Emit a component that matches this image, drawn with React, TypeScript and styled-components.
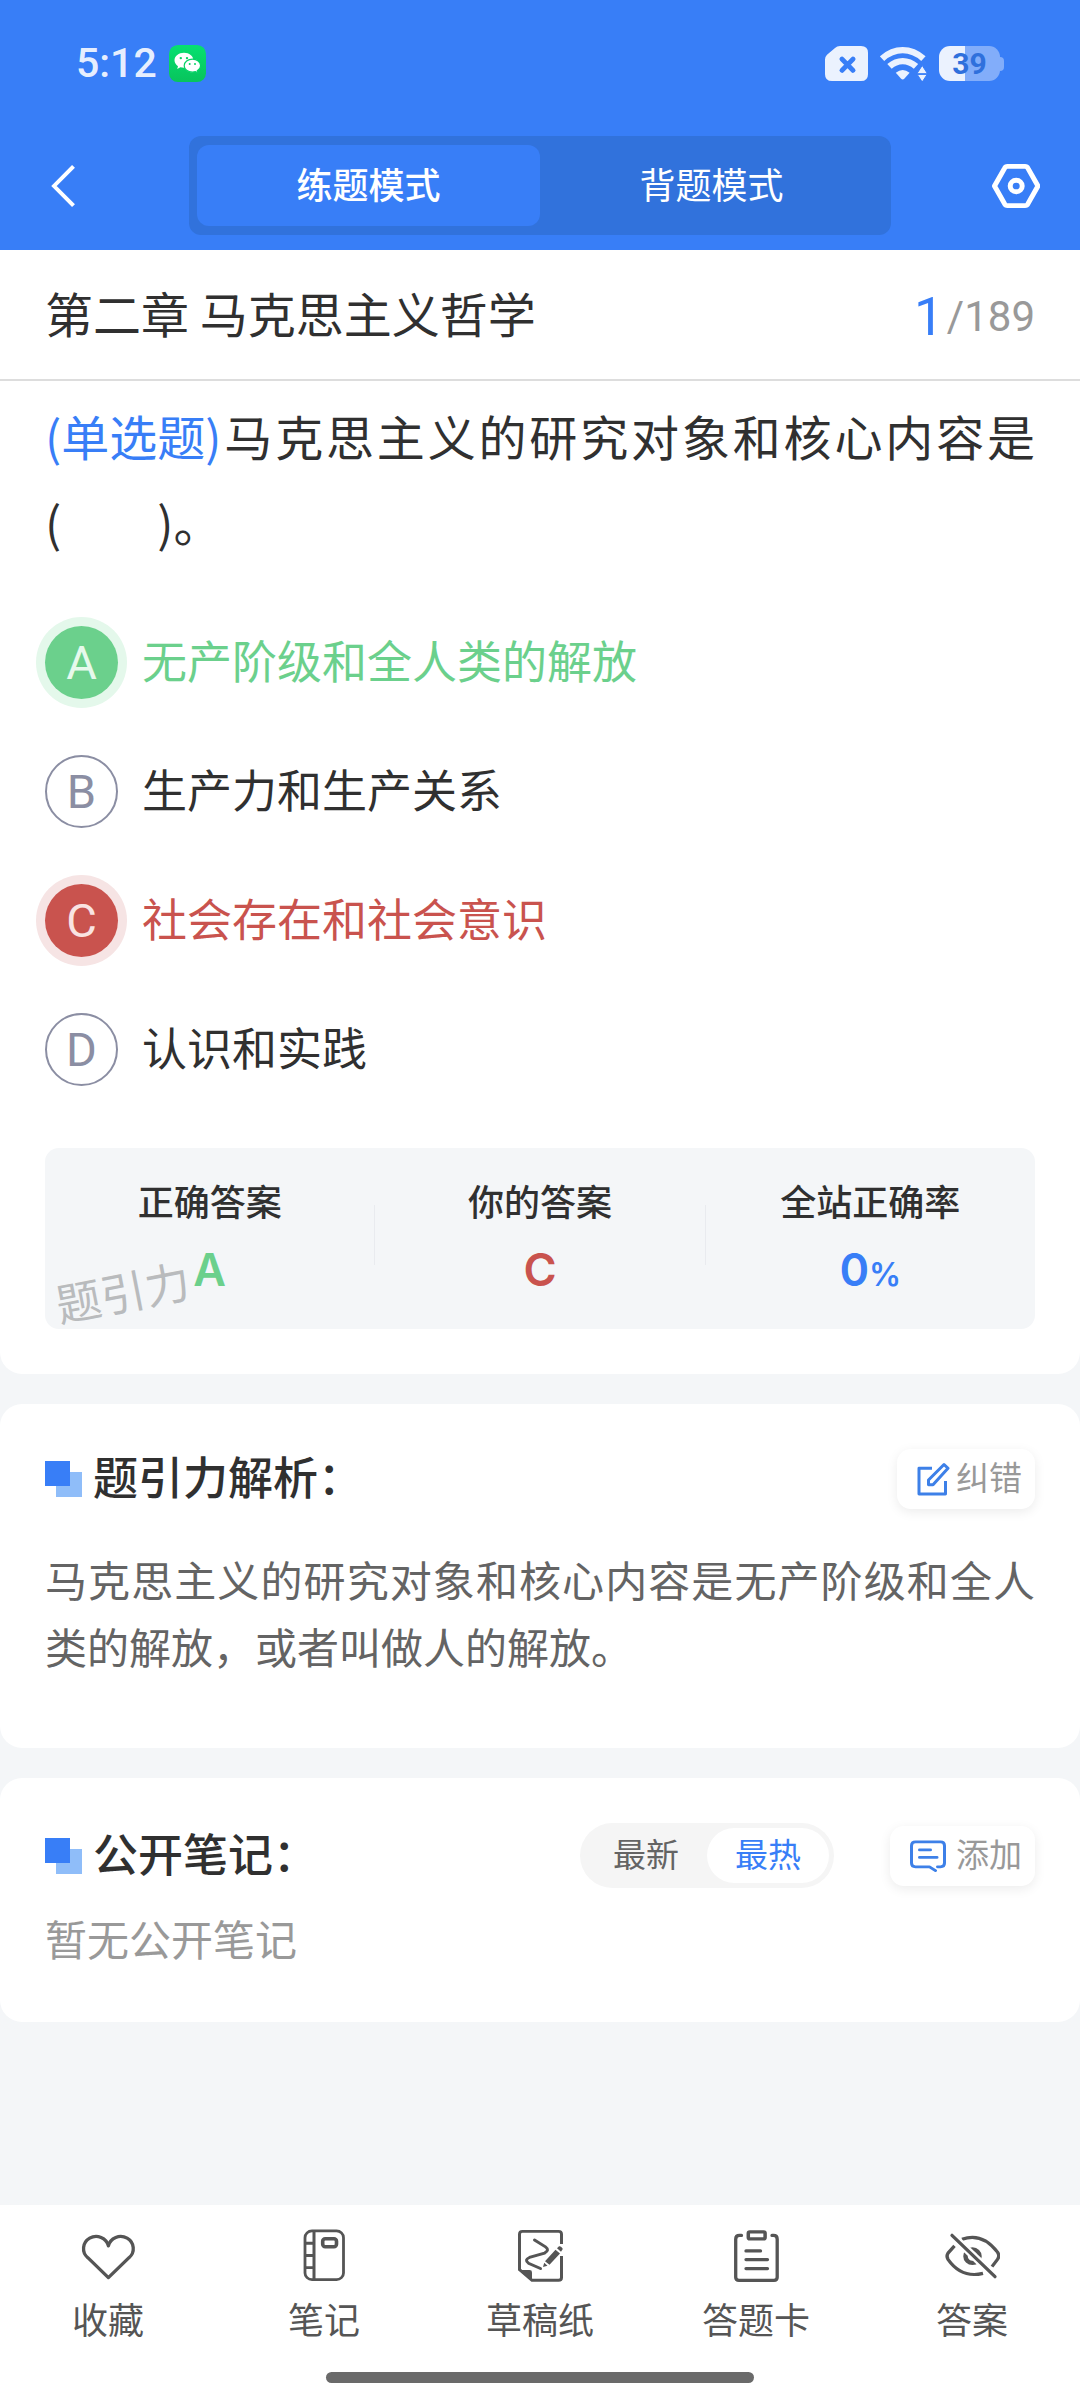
import React, { useState } from "react";
import styled, { createGlobalStyle, css } from "styled-components";

const color = {
  blue: "#387ef7",
  blueDark: "#3172dc",
  green: "#6bd08c",
  red: "#c9534e",
  ink: "#303030",
  body: "#646464",
  muted: "#999999",
  page: "#f4f6f8",
  nav: "#555555",
};

const latin = `Roboto, "Noto Sans CJK SC", sans-serif`;

const GlobalStyle = createGlobalStyle`
  * { box-sizing: border-box; }
  body {
    margin: 0;
    background: ${color.page};
    color: ${color.ink};
    font-family: "Noto Sans CJK SC", sans-serif;
  }
  button {
    margin: 0;
    padding: 0;
    border: 0;
    background: none;
    color: inherit;
    font: inherit;
    cursor: pointer;
  }
  h1, h2, p, dl, dd, dt, fieldset { margin: 0; padding: 0; border: 0; font-weight: 400; }
  svg { display: block; flex: none; }
`;

const Page = styled.div`
  display: flex;
  flex-direction: column;
  min-height: 100vh;
`;

/* CJK glyphs sit low in their line box; this lifts them to the optical centre */
const Label = styled.span`
  padding-bottom: 6px;
`;

/* ---------- header ---------- */

const Header = styled.header`
  padding-bottom: 5px;
  background: ${color.blue};
  color: #fff;
`;

const StatusBar = styled.div`
  display: flex;
  align-items: center;
  justify-content: space-between;
  height: 126px;
  padding: 0 76px;
`;

const StatusGroup = styled.div`
  display: flex;
  align-items: center;
  gap: 12px;
`;

const Time = styled.span`
  font: 500 41px/48px ${latin};
  color: rgba(255, 255, 255, 0.9);
`;

const Battery = styled.span`
  position: relative;
  width: 61px;
  height: 35px;
  margin-right: 4px;
  border-radius: 11px;
  background: linear-gradient(90deg, #ebf2fe 26px, #82adfa 26px);
  font: 700 30px/36px ${latin};
  text-align: center;
  color: #2f70dc;

  &::after {
    content: "";
    position: absolute;
    left: 61px;
    top: 11px;
    width: 4px;
    height: 14px;
    border-radius: 0 4px 4px 0;
    background: #82adfa;
  }
`;

const Toolbar = styled.div`
  display: flex;
  align-items: center;
  height: 119px;
  padding: 0 40px;
`;

const IconButton = styled.button`
  display: flex;
  align-items: center;
  justify-content: center;
  width: 48px;
  height: 48px;
`;

const ModeTabs = styled.div`
  display: flex;
  flex: 1;
  margin: 0 101px;
  padding: 9px 8px;
  border-radius: 12px;
  background: ${color.blueDark};
`;

const ModeTab = styled.button<{ $active: boolean }>`
  flex: 1;
  display: flex;
  align-items: center;
  justify-content: center;
  height: 81px;
  border-radius: 12px;
  background: ${(p) => (p.$active ? color.blue : "transparent")};
  font-size: 36px;
  font-weight: ${(p) => (p.$active ? 500 : 400)};
`;

/* ---------- cards ---------- */

const Main = styled.main`
  display: flex;
  flex-direction: column;
  gap: 30px;
`;

const Card = styled.section<{ $first?: boolean; $bottom: number }>`
  padding: ${(p) => (p.$first ? 0 : 45)}px 45px ${(p) => p.$bottom}px;
  border-radius: ${(p) => (p.$first ? "0 0 22px 22px" : "22px")};
  background: #fff;
`;

const ChapterRow = styled.div`
  display: flex;
  align-items: center;
  justify-content: space-between;
  height: 131px;
  margin: 0 -45px;
  padding: 0 45px;
  border-bottom: 2px solid #dddddd;
`;

const ChapterTitle = styled.h1`
  padding-bottom: 6px;
  font-size: 48px;
  line-height: 72px;
`;

const Progress = styled.span`
  display: flex;
  align-items: center;
  gap: 3px;
  padding-top: 4px;
  font: 400 42px/60px ${latin};
  color: #999999;
`;

const Current = styled.span`
  font-size: 53px;
  color: ${color.blue};
`;

const Question = styled.p`
  margin-top: 11px;
  font-size: 48px;
  line-height: 86px;
  text-align: justify;
`;

const Kind = styled.span`
  display: inline-block;
  color: ${color.blue};
`;

const Blank = styled.span`
  white-space: nowrap;
`;

const Options = styled.fieldset`
  display: flex;
  flex-direction: column;
  margin-top: 34px;
  min-width: 0;
`;

type Mark = "right" | "wrong" | "none";

const markColor = { right: color.green, wrong: color.red, none: color.ink };

const Option = styled.label<{ $mark: Mark }>`
  display: flex;
  align-items: center;
  gap: 24px;
  height: 129px;
  font-size: 45px;
  color: ${(p) => markColor[p.$mark]};
  cursor: pointer;
`;

const HiddenRadio = styled.input`
  position: absolute;
  width: 1px;
  height: 1px;
  margin: 0;
  opacity: 0;
`;

const Letter = styled.span<{ $mark: Mark }>`
  flex: none;
  width: 73px;
  height: 73px;
  border-radius: 50%;
  font: 400 47px/73px ${latin};
  text-align: center;
  ${(p) =>
    p.$mark === "none"
      ? css`
          border: 2px solid #8b8ea3;
          line-height: 70px;
          color: #8b8ea3;
        `
      : css`
          background: ${markColor[p.$mark]};
          box-shadow: 0 0 0 9px ${p.$mark === "right" ? "#e4f8eb" : "#f6e4e4"};
          color: ${p.$mark === "right" ? "#e6f9ec" : "#f9e3e2"};
        `}
`;

const Result = styled.dl`
  position: relative;
  display: flex;
  align-items: center;
  height: 181px;
  margin-top: 34px;
  padding-bottom: 8px;
  border-radius: 14px;
  background: #f4f6f8;
`;

const ResultCell = styled.div`
  flex: 1;
  text-align: center;
`;

const ResultLabel = styled.dt`
  font-size: 36px;
  line-height: 54px;
  font-weight: 500;
`;

const ResultValue = styled.dd<{ $color: string }>`
  height: 54px;
  margin-top: 16px;
  font: 600 45px/54px Inter, sans-serif;
  color: ${(p) => p.$color};
`;

const Unit = styled.span`
  font-size: 32px;
`;

const Divider = styled.span`
  width: 1px;
  height: 60px;
  background: #e9ebef;
`;

const Watermark = styled.span`
  position: absolute;
  left: 10px;
  bottom: 6px;
  font-size: 45px;
  line-height: 64px;
  color: #b9bbbd;
  transform: rotate(-11deg);
`;

const CardHead = styled.div`
  display: flex;
  align-items: center;
`;

const CardTitle = styled.h2`
  flex: 1;
  display: flex;
  align-items: center;
  gap: 11px;
  font-size: 45px;
  line-height: 54px;
  font-weight: 500;
`;

const ActionButton = styled.button`
  display: flex;
  align-items: center;
  gap: 6px;
  height: 60px;
  padding: 0 13px 0 20px;
  border-radius: 14px;
  background: #fff;
  box-shadow: 0 3px 12px rgba(0, 0, 0, 0.08);
  font-size: 33px;
  color: ${color.muted};
`;

const Explanation = styled.p`
  margin-top: 36px;
  font-size: 42px;
  line-height: 67px;
  text-align: justify;
  color: ${color.body};
`;

const Empty = styled.p`
  margin-top: 16px;
  font-size: 42px;
  line-height: 67px;
  color: ${color.muted};
`;

const Segment = styled.div`
  display: flex;
  margin-right: 56px;
  padding: 5px;
  border-radius: 34px;
  background: #f5f5f5;
`;

const SegmentItem = styled.button<{ $active: boolean }>`
  display: flex;
  align-items: center;
  justify-content: center;
  width: 122px;
  height: 55px;
  border-radius: 28px;
  background: ${(p) => (p.$active ? "#fff" : "transparent")};
  font-size: 33px;
  color: ${(p) => (p.$active ? color.blue : color.body)};
`;

/* ---------- bottom navigation ---------- */

const BottomNav = styled.nav`
  margin-top: auto;
  padding-top: 24px;
  background: #fff;
  color: ${color.nav};
`;

const NavRow = styled.div`
  display: flex;
`;

const NavItem = styled.button`
  flex: 1;
  display: flex;
  flex-direction: column;
  align-items: center;
  gap: 8px;
  font-size: 36px;
  line-height: 54px;
`;

const HomeBar = styled.div`
  width: 428px;
  height: 11px;
  margin: 27px auto 17px;
  border-radius: 6px;
  background: #6a6a6a;
`;

/* ---------- icons ---------- */

const WechatIcon = () => (
  <svg width="37" height="37" viewBox="0 0 37 38" preserveAspectRatio="none">
    <defs>
      <linearGradient id="wx" x1="0" y1="0" x2="0" y2="1">
        <stop offset="0" stopColor="#06e070" />
        <stop offset="1" stopColor="#08c45c" />
      </linearGradient>
    </defs>
    <rect width="37" height="38" rx="9" fill="url(#wx)" />
    <path d="M15 8c-5.300 0-9.500 3.400-9.500 7.700 0 2.500 1.400 4.600 3.500 6l-.8 2.900 3.200-1.700c1.100.3 2.300.5 3.600.5 5.200 0 9.400-3.400 9.400-7.700S20.200 8 15 8z" fill="#fff" />
    <path d="M23.500 14.500c-4.600 0-8.300 3-8.300 6.700s3.700 6.700 8.300 6.700c1.100 0 2.100-.2 3-.5l2.300 1.300-.5-2.300c2-1.200 3.300-3 3.300-5.200 0-3.700-3.600-6.700-8.100-6.700z" fill="#fff" stroke="#07d266" strokeWidth="1.200" />
    <g fill="#07d266">
      <circle cx="11.800" cy="13.400" r="1.200" />
      <circle cx="18" cy="13.400" r="1.200" />
      <circle cx="20.700" cy="19.500" r="1" />
      <circle cx="26" cy="19.500" r="1" />
    </g>
  </svg>
);

const SimIcon = () => (
  <svg width="43" height="35" viewBox="0 0 43 36" preserveAspectRatio="none">
    <path d="M15 0H36q7 0 7 7V29q0 7-7 7H7q-7 0-7-7V14q0-3 2-5L10 2q2-2 5-2z" fill="#ebf2fe" />
    <path d="M17 13.500L28 25M28 13.500L17 25" stroke={color.blue} strokeWidth="5" strokeLinecap="round" />
  </svg>
);

const WifiIcon = () => (
  <svg width="47" height="35" viewBox="0 0 47 36" preserveAspectRatio="none">
    <g fill="none" stroke="#ebf2fe" strokeWidth="6.500">
      <path d="M2 13Q11.500 4.300 22.700 4.300T43.400 13" />
      <path d="M9.500 21Q15.500 15.500 22.700 15.500T36 21" />
    </g>
    <path d="M15.800 27.500Q22.700 22 29.600 27.500L24.500 33.500Q22.700 35.500 20.900 33.500z" fill="#ebf2fe" />
    <path d="M42.200 20l5.300 8.500h-10.600zM42.200 37l-5-7.800h10z" fill="#ebf2fe" stroke={color.blue} strokeWidth="1" />
  </svg>
);

const BackIcon = () => (
  <svg width="26" height="44" viewBox="0 0 26 46" fill="none" stroke="#fff" strokeWidth="4" preserveAspectRatio="none">
    <path d="M22.500 2.500L3 23L22.500 43.500" />
  </svg>
);

const SettingsIcon = () => (
  <svg width="48" height="44" viewBox="0 0 48 46" fill="none" stroke="#fff" strokeWidth="5" strokeLinejoin="round" preserveAspectRatio="none">
    <path d="M2.500 23L12.500 4.500Q13.500 2.500 15.500 2.500H33Q35 2.500 36 4.500L46 23L36 41.500Q35 43.500 33 43.500H15.500Q13.500 43.500 12.500 41.500z" />
    <circle cx="24.200" cy="23" r="6" />
  </svg>
);

const SquaresIcon = () => (
  <svg width="37" height="36" viewBox="0 0 37 36">
    <rect x="11" y="11" width="26" height="25" fill="#8fbdf9" />
    <rect width="25" height="25" fill="#387ef7" />
  </svg>
);

const EditIcon = () => (
  <svg width="33" height="34" viewBox="0 0 33 35" fill="none" stroke="#3d80e8" strokeWidth="3" strokeLinejoin="round" preserveAspectRatio="none">
    <path d="M15 6.500H2V33H28.500V19.500" />
    <path d="M27 2.500L31 6.500L16 23.500H11.500V18.500z" />
  </svg>
);

const CommentIcon = () => (
  <svg width="40" height="32" viewBox="0 0 40 34" fill="none" stroke="#3d80e8" strokeWidth="3" strokeLinecap="round" strokeLinejoin="round" preserveAspectRatio="none">
    <path d="M27.500 28.500H30.500Q34.500 28.500 34.500 24.500V6Q34.500 2 30.500 2H5.500Q1.500 2 1.500 6V24.500Q1.500 28.500 5.500 28.500H19.500L25.500 32.500" />
    <path d="M9.500 10.500H20.500M9.500 18.500H27" />
  </svg>
);

const navSvg = {
  width: 56,
  height: 54,
  viewBox: "0 0 56 56",
  preserveAspectRatio: "none",
  fill: "none",
  stroke: "currentColor",
  strokeWidth: 3.3,
} as const;

const HeartIcon = () => (
  <svg {...navSvg}>
    <path d="M28.400 50.400L7.800 29.800A12.600 12.600 0 1 1 28.400 17.500A12.600 12.600 0 1 1 49 29.800z" strokeLinejoin="round" />
  </svg>
);

const NotebookIcon = () => (
  <svg {...navSvg}>
    <rect x="9" y="2" width="38.500" height="50.500" rx="7" strokeWidth="2.800" />
    <path d="M18 2V52.500M9 14.800H18M9 27.500H18M9 40H18" strokeWidth="3" />
    <rect x="26.700" y="10.200" width="13.800" height="8.200" rx="2.500" strokeWidth="3.600" />
  </svg>
);

const DraftIcon = () => (
  <svg {...navSvg} strokeWidth={3}>
    <path d="M49.500 15.500V5.500Q49.500 2.500 46.500 2.500H10.500Q7.500 2.500 7.500 5.500V42L20 53.200H46.500Q49.500 53.200 49.500 50.200V28" />
    <path d="M6.500 42.500H17.500Q20 42.500 20 45V54z" fill="currentColor" stroke="none" />
    <path d="M22.500 11.500L33.500 18.500Q38 22 32.500 25L17.500 29.500Q12 32 16.500 35.500L28.500 41" strokeLinecap="round" />
    <path d="M33 33.500L43.500 21.500L48 25.500L37.500 37zM45 20L47 18Q48 17.500 49 18.500L50.500 20Q51 21 50 22L49 23.500zM32.200 35L35.500 38L31 39.500z" fill="currentColor" stroke="none" />
  </svg>
);

const ClipboardIcon = () => (
  <svg {...navSvg} strokeLinecap="round">
    <path d="M13.500 6.700H11.500Q7.700 6.700 7.700 10.500V50Q7.700 53.200 11 53.200H46Q49.200 53.200 49.200 50V10.500Q49.200 6.700 45.500 6.700H44" />
    <rect x="20.300" y="3" width="16.800" height="7.200" rx="1.500" strokeWidth="3.500" />
    <path d="M18 22.700H32.500M18 31.700H39.500M18 41H39.500" />
  </svg>
);

const EyeOffIcon = () => (
  <svg {...navSvg} strokeLinejoin="round">
    <path d="M18 10.700Q38 3 53.500 24Q56 28 53.500 31.500L48 39" />
    <path d="M10.500 17.500L4 25Q2 28 4 31.500Q17.500 51.500 39 46" />
    <circle cx="28.500" cy="28.200" r="7" strokeWidth="4.500" />
    <path d="M12 10.500L48 46.500" stroke="#fff" strokeWidth="8" />
    <path d="M8 6.500L51 49.500" strokeLinecap="round" />
  </svg>
);

/* ---------- data ---------- */

const options = [
  { letter: "A", text: "无产阶级和全人类的解放" },
  { letter: "B", text: "生产力和生产关系" },
  { letter: "C", text: "社会存在和社会意识" },
  { letter: "D", text: "认识和实践" },
];

const modes = ["练题模式", "背题模式"];
const sorts = ["最新", "最热"];

const navItems = [
  { label: "收藏", Icon: HeartIcon },
  { label: "笔记", Icon: NotebookIcon },
  { label: "草稿纸", Icon: DraftIcon },
  { label: "答题卡", Icon: ClipboardIcon },
  { label: "答案", Icon: EyeOffIcon },
];

const correct = "A";

export default function App() {
  const [mode, setMode] = useState(modes[0]);
  const [sort, setSort] = useState(sorts[1]);
  const [answer, setAnswer] = useState("C");

  const markOf = (letter: string): Mark =>
    letter === correct ? "right" : letter === answer ? "wrong" : "none";

  return (
    <Page>
      <GlobalStyle />
      <Header>
        <StatusBar>
          <StatusGroup>
            <Time>5:12</Time>
            <WechatIcon />
          </StatusGroup>
          <StatusGroup>
            <SimIcon />
            <WifiIcon />
            <Battery>39</Battery>
          </StatusGroup>
        </StatusBar>
        <Toolbar>
          <IconButton aria-label="返回">
            <BackIcon />
          </IconButton>
          <ModeTabs>
            {modes.map((m) => (
              <ModeTab key={m} $active={m === mode} aria-pressed={m === mode} onClick={() => setMode(m)}>
                <Label>{m}</Label>
              </ModeTab>
            ))}
          </ModeTabs>
          <IconButton aria-label="设置">
            <SettingsIcon />
          </IconButton>
        </Toolbar>
      </Header>

      <Main>
        <Card $first $bottom={45}>
          <ChapterRow>
            <ChapterTitle>第二章 马克思主义哲学</ChapterTitle>
            <Progress>
              <Current>1</Current>
              <span>/189</span>
            </Progress>
          </ChapterRow>
          <Question>
            <Kind>(单选题)</Kind>马克思主义的研究对象和核心内容是
            <Blank>(&emsp;&emsp;)。</Blank>
          </Question>
          <Options aria-label="选项">
            {options.map(({ letter, text }) => (
              <Option key={letter} $mark={markOf(letter)}>
                <HiddenRadio
                  type="radio"
                  name="answer"
                  value={letter}
                  checked={answer === letter}
                  onChange={() => setAnswer(letter)}
                />
                <Letter $mark={markOf(letter)}>{letter}</Letter>
                <Label>{text}</Label>
              </Option>
            ))}
          </Options>
          <Result>
            <ResultCell>
              <ResultLabel>正确答案</ResultLabel>
              <ResultValue $color={color.green}>{correct}</ResultValue>
            </ResultCell>
            <Divider />
            <ResultCell>
              <ResultLabel>你的答案</ResultLabel>
              <ResultValue $color={color.red}>{answer}</ResultValue>
            </ResultCell>
            <Divider />
            <ResultCell>
              <ResultLabel>全站正确率</ResultLabel>
              <ResultValue $color={color.blue}>
                0<Unit>%</Unit>
              </ResultValue>
            </ResultCell>
            <Watermark>题引力</Watermark>
          </Result>
        </Card>

        <Card $bottom={69}>
          <CardHead>
            <CardTitle>
              <SquaresIcon />
              <Label>题引力解析：</Label>
            </CardTitle>
            <ActionButton>
              <EditIcon />
              <Label>纠错</Label>
            </ActionButton>
          </CardHead>
          <Explanation>
            马克思主义的研究对象和核心内容是无产阶级和全人类的解放，或者叫做人的解放。
          </Explanation>
        </Card>

        <Card $bottom={51}>
          <CardHead>
            <CardTitle>
              <SquaresIcon />
              <Label>公开笔记：</Label>
            </CardTitle>
            <Segment>
              {sorts.map((s) => (
                <SegmentItem key={s} $active={s === sort} aria-pressed={s === sort} onClick={() => setSort(s)}>
                  <Label>{s}</Label>
                </SegmentItem>
              ))}
            </Segment>
            <ActionButton>
              <CommentIcon />
              <Label>添加</Label>
            </ActionButton>
          </CardHead>
          <Empty>暂无公开笔记</Empty>
        </Card>
      </Main>

      <BottomNav>
        <NavRow>
          {navItems.map(({ label, Icon }) => (
            <NavItem key={label}>
              <Icon />
              {label}
            </NavItem>
          ))}
        </NavRow>
        <HomeBar />
      </BottomNav>
    </Page>
  );
}
